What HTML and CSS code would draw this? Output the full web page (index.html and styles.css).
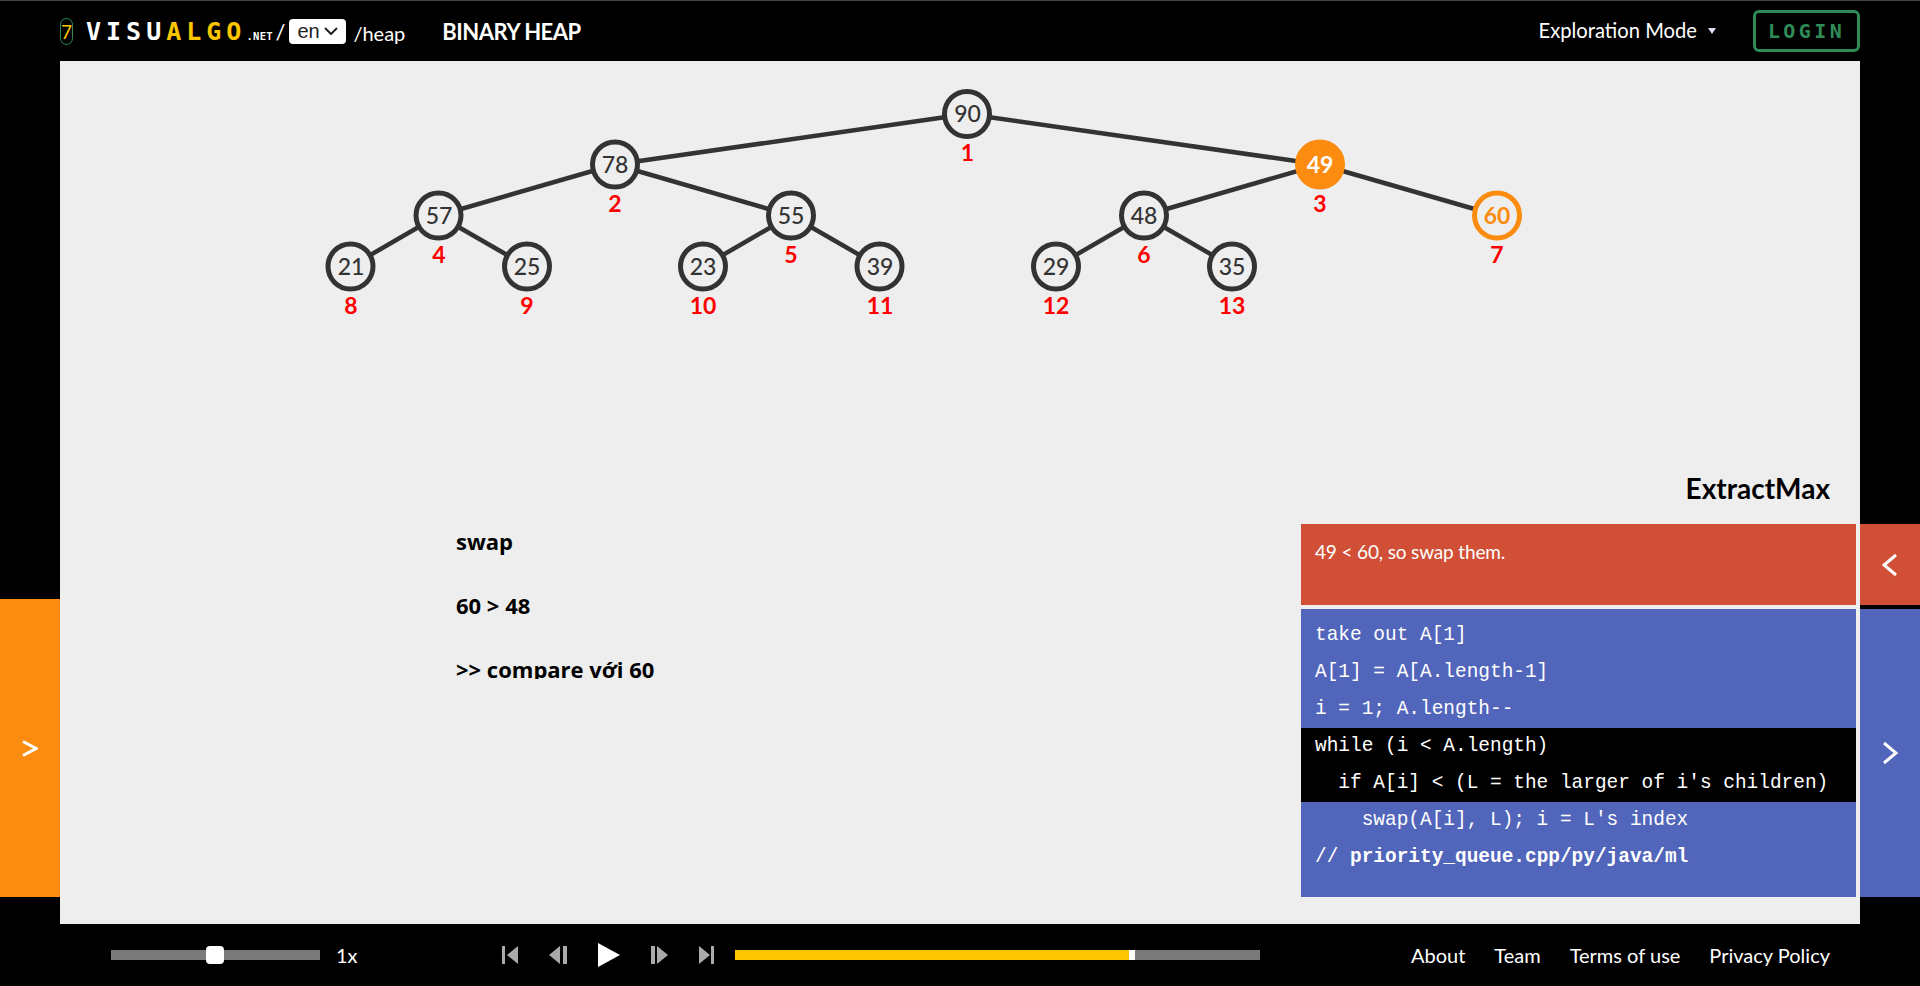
FILE: index.html
```html
<!DOCTYPE html>
<html lang="en">

<head>
    <meta charset="UTF-8">
    <meta name="viewport" content="width=device-width, initial-scale=1.0">
    <title>Binary Heap</title>
    <link rel="stylesheet" href="styles.css">
</head>

<body>
    <div class="top-bar">
        <div class="version">7</div>
        <div class="logo"><span class="logo-white">VISU</span><span class="logo-yellow">ALGO</span><span class="logo-net">.NET</span></div>
        <span class="slash">/</span>
        <div class="lang">
            <span>en</span>
            <svg width="14" height="8" viewBox="0 0 14 8"><polyline class="lang-arrow" points="1,1 7,7 13,1" /></svg>
        </div>
        <span class="page-path">/heap</span>
        <span class="page-title">BINARY HEAP</span>
        <div class="mode">Exploration Mode</div>
        <div class="mode-arrow"></div>
        <div class="login">LOGIN</div>
    </div>

    <div class="middle">
        <div class="left-side">
            <div class="overlay-tab">
                <svg width="16" height="17" viewBox="0 0 16 17"><polyline class="arrow" points="1,1.5 14,8.5 1,15.5" /></svg>
            </div>
        </div>

        <div class="viz">
            <!-- viewBox uses page coordinates so the node list reads like the heap layout -->
            <svg class="graph" width="1800" height="400" viewBox="60 61 1800 400">
                <g class="edges">
                    <line x1="967" y1="114" x2="615" y2="164.5" />
                    <line x1="967" y1="114" x2="1320" y2="164.5" />
                    <line x1="615" y1="164.5" x2="438.5" y2="215.5" />
                    <line x1="615" y1="164.5" x2="791" y2="215.5" />
                    <line x1="1320" y1="164.5" x2="1144" y2="215.5" />
                    <line x1="1320" y1="164.5" x2="1497" y2="215.5" />
                    <line x1="438.5" y1="215.5" x2="350.5" y2="266.5" />
                    <line x1="438.5" y1="215.5" x2="527" y2="266.5" />
                    <line x1="791" y1="215.5" x2="703" y2="266.5" />
                    <line x1="791" y1="215.5" x2="879.5" y2="266.5" />
                    <line x1="1144" y1="215.5" x2="1056" y2="266.5" />
                    <line x1="1144" y1="215.5" x2="1232" y2="266.5" />
                </g>
                <g class="nodes">
                    <circle cx="967" cy="114" r="22.5" />
                    <circle cx="615" cy="164.5" r="22.5" />
                    <circle class="lit" cx="1320" cy="164.5" r="22.5" />
                    <circle cx="438.5" cy="215.5" r="22.5" />
                    <circle cx="791" cy="215.5" r="22.5" />
                    <circle cx="1144" cy="215.5" r="22.5" />
                    <circle class="ring" cx="1497" cy="215.5" r="22.5" />
                    <circle cx="350.5" cy="266.5" r="22.5" />
                    <circle cx="527" cy="266.5" r="22.5" />
                    <circle cx="703" cy="266.5" r="22.5" />
                    <circle cx="879.5" cy="266.5" r="22.5" />
                    <circle cx="1056" cy="266.5" r="22.5" />
                    <circle cx="1232" cy="266.5" r="22.5" />
                </g>
                <g class="values">
                    <text x="967.5" y="122">90</text>
                    <text x="615" y="172.5">78</text>
                    <text class="lit-text" x="1320" y="172.5">49</text>
                    <text x="439" y="223.5">57</text>
                    <text x="791" y="223.5">55</text>
                    <text x="1144" y="223.5">48</text>
                    <text class="ring-text" x="1497" y="223.5">60</text>
                    <text x="351" y="274.5">21</text>
                    <text x="527" y="274.5">25</text>
                    <text x="703" y="274.5">23</text>
                    <text x="880" y="274.5">39</text>
                    <text x="1056" y="274.5">29</text>
                    <text x="1232" y="274.5">35</text>
                </g>
                <g class="labels">
                    <text x="967.5" y="161">1</text>
                    <text x="615" y="212">2</text>
                    <text x="1320" y="212">3</text>
                    <text x="439" y="263">4</text>
                    <text x="791" y="263">5</text>
                    <text x="1144" y="263">6</text>
                    <text x="1497" y="263">7</text>
                    <text x="351" y="314">8</text>
                    <text x="527" y="314">9</text>
                    <text x="703" y="314">10</text>
                    <text x="880" y="314">11</text>
                    <text x="1056" y="314">12</text>
                    <text x="1232" y="314">13</text>
                </g>
            </svg>

            <div class="lower">
                <div class="note">
                    <p>swap</p>
                    <p>60 &gt; 48</p>
                    <p>&gt;&gt; compare với 60</p>
                </div>
                <div class="panel-col">
                    <div class="op-title">ExtractMax</div>
                    <div class="status">49 &lt; 60, so swap them.</div>
                    <div class="codetrace">
                        <div class="code-line">take out A[1]</div>
                        <div class="code-line">A[1] = A[A.length-1]</div>
                        <div class="code-line">i = 1; A.length--</div>
                        <div class="code-line current">while (i &lt; A.length)</div>
                        <div class="code-line current">  if A[i] &lt; (L = the larger of i's children)</div>
                        <div class="code-line">    swap(A[i], L); i = L's index</div>
                        <div class="code-line">// <b>priority_queue.cpp/py/java/ml</b></div>
                    </div>
                </div>
            </div>
        </div>

        <div class="right-side">
            <div class="side-btn status-btn">
                <svg width="16" height="24" viewBox="0 0 16 24"><polyline class="arrow" points="14,2 2,12 14,22" /></svg>
            </div>
            <div class="side-btn code-btn">
                <svg width="16" height="24" viewBox="0 0 16 24"><polyline class="arrow" points="2,2 14,12 2,22" /></svg>
            </div>
        </div>
    </div>

    <div class="bottom-bar">
        <div class="speed-track"><div class="speed-thumb"></div></div>
        <div class="speed-label">1x</div>
        <div class="controls">
            <svg class="ctl" width="16" height="18" viewBox="0 0 16 18"><rect x="0" y="0" width="3" height="18" /><polygon points="16,0 16,18 5,9" /></svg>
            <svg class="ctl" width="18" height="18" viewBox="0 0 18 18"><polygon points="11,0 11,18 0,9" /><rect x="14" y="0" width="4" height="18" /></svg>
            <svg class="ctl play" width="22" height="24" viewBox="0 0 22 24"><polygon points="0,0 22,12 0,24" /></svg>
            <svg class="ctl" width="17" height="18" viewBox="0 0 17 18"><rect x="0" y="0" width="4" height="18" /><polygon points="6,0 17,9 6,18" /></svg>
            <svg class="ctl" width="15" height="18" viewBox="0 0 15 18"><polygon points="0,0 11,9 0,18" /><rect x="12" y="0" width="3" height="18" /></svg>
        </div>
        <div class="progress">
            <div class="progress-done"></div>
            <div class="progress-head"></div>
        </div>
        <div class="links">
            <span>About</span>
            <span>Team</span>
            <span>Terms of use</span>
            <span>Privacy Policy</span>
        </div>
    </div>
</body>

</html>
```

FILE: styles.css
```css
* {
    margin: 0;
    padding: 0;
    box-sizing: border-box;
}
html, body {
    height: 986px;
    overflow: hidden;
}
body {
    background: #000;
    color: #fff;
    font-family: Lato, "Liberation Sans", sans-serif;
}

/* top bar */
.top-bar {
    height: 61px;
    border-top: 1px solid #444;
    padding: 0 60px;
    display: flex;
    align-items: center;
}
.version {
    width: 13px;
    height: 27px;
    border: 1px solid #2e8b57;
    border-radius: 7px;
    color: #fbc500;
    font-size: 19px;
    line-height: 25px;
    text-align: center;
}
.logo {
    margin-left: 13px;
    font-family: "DejaVu Sans Mono", monospace;
    font-weight: bold;
    font-size: 25px;
    letter-spacing: 5px;
    white-space: nowrap;
}
.logo-yellow {
    color: #fbc500;
}
.logo-net {
    font-size: 10.5px;
    letter-spacing: 0.3px;
}
.slash {
    margin-left: 2.5px;
    font-size: 22px;
}
.lang {
    width: 57px;
    height: 25px;
    margin-left: 4px;
    padding: 0 8px;
    background: #fff;
    border-radius: 4px;
    color: #222;
    font-family: "Liberation Sans", sans-serif;
    font-size: 20px;
    display: flex;
    align-items: center;
    justify-content: space-between;
}
.lang-arrow {
    fill: none;
    stroke: #222;
    stroke-width: 2;
}
.page-path {
    margin: 3px 0 0 7px;
    font-size: 20px;
}
.page-title {
    margin-left: 37px;
    font-size: 22px;
    font-weight: bold;
    letter-spacing: -0.5px;
}
.mode {
    margin: 0 0 2px auto;
    font-size: 20.2px;
}
.mode-arrow {
    margin-left: 11px;
    border-top: 6px solid #dde;
    border-left: 4px solid transparent;
    border-right: 4px solid transparent;
}
.login {
    margin-left: 37px;
    width: 107px;
    height: 42px;
    border: 3px solid #2e8b57;
    border-radius: 6px;
    color: #2e8b57;
    font-family: "DejaVu Sans Mono", monospace;
    font-weight: bold;
    font-size: 20px;
    letter-spacing: 3.4px;
    line-height: 36px;
    text-align: center;
}

/* middle */
.middle {
    height: 863px;
    display: grid;
    grid-template-columns: 60px 1800px 60px;
}
.left-side {
    padding-top: 538px;
}
.overlay-tab {
    height: 298px;
    background: #fb8c0f;
    display: flex;
    align-items: center;
    justify-content: center;
}
.arrow {
    fill: none;
    stroke: #fff;
    stroke-width: 3;
}
.viz {
    background: #eee;
    padding-bottom: 27px;
    display: flex;
    flex-direction: column;
}
.graph {
    display: block;
    flex: none;
}
.edges line {
    stroke: #333;
    stroke-width: 4.5;
}
.nodes circle {
    fill: #eee;
    stroke: #333;
    stroke-width: 5;
}
.nodes circle.lit {
    fill: #fb8c0f;
    stroke: #fb8c0f;
}
.nodes circle.ring {
    stroke: #fb8c0f;
}
.values text {
    fill: #333;
    font-size: 23px;
    font-weight: 500;
    text-anchor: middle;
}
.values text.lit-text {
    fill: #fff;
    font-weight: bold;
}
.values text.ring-text {
    fill: #fb8c0f;
    font-weight: bold;
}
.labels text {
    fill: #f00;
    font-size: 23px;
    font-weight: bold;
    text-anchor: middle;
}

.lower {
    flex: 1;
    display: flex;
    justify-content: space-between;
}
.note {
    height: 218px;
    padding: 65px 0 0 396px;
    overflow: hidden;
    color: #000;
    font-family: "Open Sans", sans-serif;
    font-size: 22px;
    font-weight: bold;
    line-height: 30px;
}
.note p {
    margin-bottom: 34px;
}
.panel-col {
    width: 555px;
    margin-right: 4px;
    display: flex;
    flex-direction: column;
}
.op-title {
    height: 63px;
    padding-right: 26px;
    color: #000;
    font-size: 28px;
    font-weight: bold;
    line-height: 54px;
    text-align: right;
}
.status {
    height: 81px;
    padding: 14px 14px 0;
    background: #d14f36;
    font-size: 19px;
    letter-spacing: -0.15px;
    line-height: 28px;
}
.codetrace {
    height: 288px;
    margin-top: 4px;
    padding-top: 8px;
    background: #5165ba;
    font-family: "Liberation Mono", monospace;
    font-size: 19.45px;
}
.code-line {
    height: 37px;
    padding-left: 14px;
    line-height: 37px;
    white-space: pre;
}
.code-line.current {
    background: #000;
}

.right-side {
    padding-top: 463px;
}
.side-btn {
    display: flex;
    align-items: center;
    justify-content: center;
}
.status-btn {
    height: 81px;
    background: #d14f36;
}
.code-btn {
    height: 288px;
    margin-top: 4px;
    background: #5165ba;
}

/* bottom bar */
.bottom-bar {
    height: 62px;
    padding-left: 111px;
    padding-right: 90px;
    display: flex;
    align-items: center;
}
.speed-track {
    width: 209px;
    height: 10px;
    position: relative;
    background: #7a7a7a;
}
.speed-thumb {
    width: 18px;
    height: 18px;
    position: absolute;
    left: 95px;
    top: -4px;
    background: #fff;
    border-radius: 4px;
}
.speed-label {
    width: 24px;
    margin-left: 16px;
    font-size: 20px;
}
.controls {
    margin-left: 142px;
    display: flex;
    align-items: center;
    gap: 31px;
}
.ctl {
    display: block;
    fill: #aaa;
}
.ctl.play {
    fill: #fff;
}
.progress {
    width: 525px;
    height: 10px;
    margin-left: 21px;
    background: #7a7a7a;
    display: flex;
}
.progress-done {
    width: 394px;
    background: #fbc500;
}
.progress-head {
    width: 6px;
    background: #fff;
}
.links {
    margin-left: auto;
    display: flex;
    gap: 29px;
    font-size: 20px;
}
```
